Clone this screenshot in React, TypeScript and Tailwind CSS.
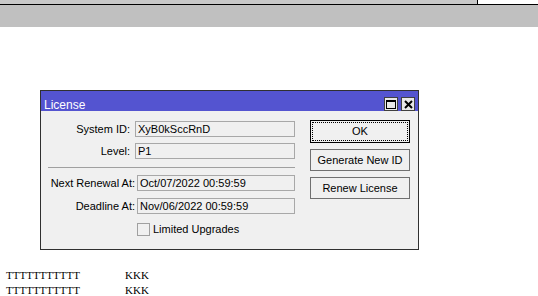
import * as React from 'react';

const fields = [
    { label: 'System ID:', value: 'XyB0kSccRnD' },
    { label: 'Level:', value: 'P1' },
];

const dates = [
    { label: 'Next Renewal At:', value: 'Oct/07/2022 00:59:59' },
    { label: 'Deadline At:', value: 'Nov/06/2022 00:59:59' },
];

function Field({ label, value, wide }: { label: string; value: string; wide?: boolean }) {
    return (
        <div className="flex items-center h-[16px]">
            <div className={(wide ? 'w-[96px] pr-[2px]' : 'w-[94px] pr-[5px]') + ' text-right whitespace-nowrap'}>{label}</div>
            <div
                className={
                    (wide ? 'w-[158px]' : 'w-[160px]') +
                    ' h-[16px] border border-[#a8a8a8] bg-[#f0f0f0] pl-[2px] leading-[14px] whitespace-nowrap'
                }
            >
                {value}
            </div>
        </div>
    );
}

function TitleButton({ children }: { children: React.ReactNode }) {
    return (
        <div className="w-[14px] h-[14px] border border-[#404040] bg-[#e8e8e8] flex items-center justify-center">
            {children}
        </div>
    );
}

export default function App() {
    return (
        <div className="w-[538px] h-[296px] bg-white overflow-hidden" style={{ fontFamily: '"Liberation Sans", Arial, sans-serif' }}>
            <div className="flex">
                <div className="w-[478px] h-[5px] bg-[#c8c8c8] border-b border-r border-black" />
                <div className="flex-1 h-[5px] border-b border-black" />
            </div>
            <div className="h-[22px] bg-[#c0c0c0]" />

            <div className="ml-[40px] mt-[63px] w-[379px] border border-[#303030] text-[11px] text-black">
                <div className="h-[20px] bg-[#5454d0] flex justify-between pl-[3px] pr-[3px]">
                    <span className="text-white text-[12px] leading-none pt-[8px]">License</span>
                    <div className="flex gap-[3px] self-end">
                        <TitleButton>
                            <div className="w-[10px] h-[9px] border border-black border-t-2" />
                        </TitleButton>
                        <TitleButton>
                            <svg width="9" height="9" viewBox="0 0 9 9">
                                <path d="M1 1 L8 8 M8 1 L1 8" stroke="black" strokeWidth="2" />
                            </svg>
                        </TitleButton>
                    </div>
                </div>
                <div className="bg-[#f0f0f0] h-[138px] flex pt-[10px]">
                    <div className="flex flex-col">
                        <div className="flex flex-col gap-[6px]">
                            {fields.map((f) => (
                                <Field key={f.label} {...f} />
                            ))}
                        </div>
                        <div className="ml-[7px] w-[247px] border-t border-[#a0a0a0] mt-[8px] mb-[7px]" />
                        <div className="flex flex-col gap-[7px]">
                            {dates.map((f) => (
                                <Field key={f.label} {...f} wide />
                            ))}
                        </div>
                        <div className="flex items-center ml-[96px] mt-[7px]">
                            <div className="w-[13px] h-[13px] border border-[#a0a0a0] bg-[#f0f0f0]" />
                            <span className="ml-[3px]">Limited Upgrades</span>
                        </div>
                    </div>
                    <div className="ml-[15px] -mt-[1px] flex flex-col gap-[6px] w-[100px]">
                        <div className="h-[23px] border border-black p-[1px]">
                            <div className="h-full border border-dotted border-black flex items-center justify-center">OK</div>
                        </div>
                        <div className="h-[22px] border border-[#707070] flex items-center justify-center">Generate New ID</div>
                        <div className="h-[22px] border border-[#707070] flex items-center justify-center">Renew License</div>
                    </div>
                </div>
            </div>

            <div className="mt-[18px] pl-[6px] text-[11px] leading-[15px]" style={{ fontFamily: '"Liberation Serif", serif' }}>
                {[0, 1].map((i) => (
                    <div key={i} className="flex">
                        <span className="w-[119px]">TTTTTTTTTTT</span>
                        <span>KKK</span>
                    </div>
                ))}
            </div>
        </div>
    );
}
